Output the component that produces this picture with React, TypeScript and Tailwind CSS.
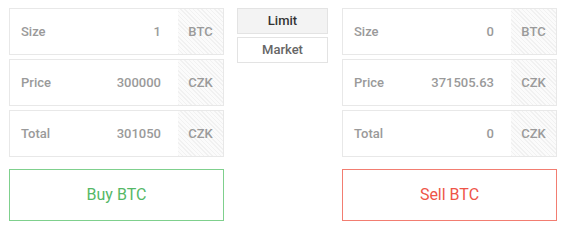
const hatch =
  "bg-[repeating-linear-gradient(45deg,#f1f1f1_0px,#f1f1f1_1px,#fbfbfb_1px,#fbfbfb_3px)]";

type FieldProps = { label: string; value: string; unit: string };

function Field({ label, value, unit }: FieldProps) {
  return (
    <div className="flex h-[47px] border border-[#e8e8e8] bg-white">
      <div className="flex flex-1 items-center justify-between pl-[11px] pr-[17px]">
        <span className="text-[13px] font-medium text-[#9a9a9a]">{label}</span>
        <span className="text-[13px] font-medium text-[#9a9a9a]">{value}</span>
      </div>
      <div
        className={`flex w-[45px] items-center justify-center text-[13px] font-medium text-[#9a9a9a] ${hatch}`}
      >
        {unit}
      </div>
    </div>
  );
}

type SideProps = {
  fields: FieldProps[];
  action: string;
  tone: "buy" | "sell";
};

function Side({ fields, action, tone }: SideProps) {
  return (
    <div className="flex w-[215px] flex-col">
      <div className="flex flex-col gap-[4px]">
        {fields.map((f) => (
          <Field key={f.label} {...f} />
        ))}
      </div>
      <button
        className={
          tone === "buy"
            ? "mt-[12px] h-[52px] border border-[#7fd08d] bg-white text-[16px] text-[#55b866]"
            : "mt-[12px] h-[52px] border border-[#f27d71] bg-white text-[16px] text-[#ee5548]"
        }
      >
        {action}
      </button>
    </div>
  );
}

export default function App() {
  return (
    <div
      className="flex h-[232px] w-[565px] bg-white pl-[9px] pt-[8px]"
      style={{ fontFamily: "Roboto, 'Liberation Sans', sans-serif" }}
    >
      <Side
        tone="buy"
        action="Buy BTC"
        fields={[
          { label: "Size", value: "1", unit: "BTC" },
          { label: "Price", value: "300000", unit: "CZK" },
          { label: "Total", value: "301050", unit: "CZK" },
        ]}
      />
      <div className="ml-[13px] mr-[14px] flex w-[91px] flex-col gap-[3px]">
        <button className="h-[26px] border border-[#e3e3e3] bg-[#f3f3f3] text-[13px] font-medium text-[#333]">
          Limit
        </button>
        <button className="h-[26px] border border-[#e3e3e3] bg-white text-[13px] font-medium text-[#666]">
          Market
        </button>
      </div>
      <Side
        tone="sell"
        action="Sell BTC"
        fields={[
          { label: "Size", value: "0", unit: "BTC" },
          { label: "Price", value: "371505.63", unit: "CZK" },
          { label: "Total", value: "0", unit: "CZK" },
        ]}
      />
    </div>
  );
}
